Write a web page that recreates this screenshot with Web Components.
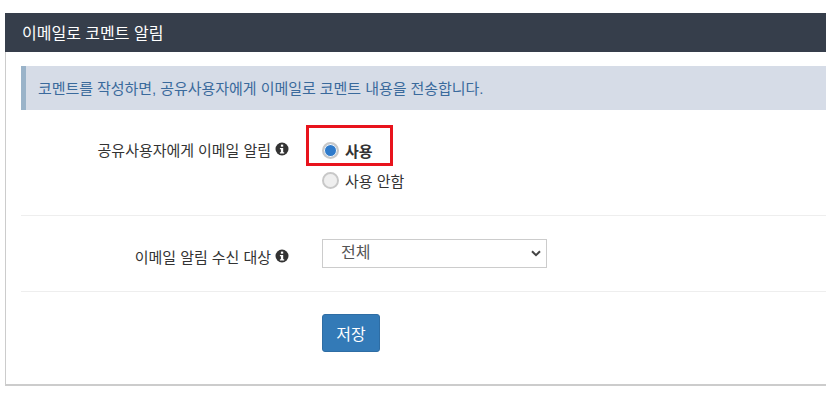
<!DOCTYPE html>
<html lang="ko">
<head>
<meta charset="utf-8">
<title>이메일로 코멘트 알림</title>
<style>
html, body { margin: 0; background: #fff; overflow: hidden; }
body { height: 412px; font-family: "Liberation Sans", "Noto Sans CJK KR", sans-serif; font-size: 15px; color: #333; }
</style>
</head>
<body>
<x-panel heading="이메일로 코멘트 알림">
    <x-callout>코멘트를 작성하면, 공유사용자에게 이메일로 코멘트 내용을 전송합니다.</x-callout>
    <x-row label="공유사용자에게 이메일 알림" pad="25px 0 20px" lift="-2px">
        <x-radio checked marked>사용</x-radio>
        <x-radio>사용 안함</x-radio>
    </x-row>
    <x-row label="이메일 알림 수신 대상" pad="23px 0 20px" lift="1px" line>
        <x-select value="전체"></x-select>
    </x-row>
    <x-row pad="22px 0 0">
        <x-button>저장</x-button>
    </x-row>
</x-panel>
<script>
"use strict"
{
    const info = `<svg width="14" height="14" viewBox="0 0 14 14" aria-hidden="true"><circle cx="7" cy="7" r="6.5" fill="#333"/><rect x="5.9" y="2.6" width="2.3" height="2.1" fill="#fff"/><path d="M4.9 6h3.3v4.2h1v1.2H4.9v-1.2h1V7.2h-1z" fill="#fff"/></svg>`;

    class Panel extends HTMLElement {
        constructor() {
            super();
            this.attachShadow({ mode: 'open' }).innerHTML = `
<style>
:host { display: block; margin: 13px 0 0 5px; box-sizing: border-box; height: 373px; border-left: 1px solid #ccc; border-bottom: 2px solid #ccc; }
header { margin-left: -1px; height: 39px; box-sizing: border-box; padding: 0 17px 1px; display: flex; align-items: center; background: #363e4b; color: #fff; font-size: 16px; }
main { padding: 14px 0 0 15px; }
</style>
<header>${this.getAttribute('heading')}</header>
<main><slot></slot></main>`;
        }
    }

    class Callout extends HTMLElement {
        constructor() {
            super();
            this.attachShadow({ mode: 'open' }).innerHTML = `
<style>
:host { display: flex; align-items: center; height: 44px; box-sizing: border-box; padding: 0 0 2px 12px; background: #d6dce7; border-left: 5px solid #9ab3c9; color: #3a6a9c; font-size: 15px; letter-spacing: -0.05px; }
</style>
<slot></slot>`;
        }
    }

    class Row extends HTMLElement {
        constructor() {
            super();
            const label = this.getAttribute('label');
            this.attachShadow({ mode: 'open' }).innerHTML = `
<style>
:host { display: grid; grid-template-columns: 268px 1fr; column-gap: 33px; }
:host([line]) { border-top: 1px solid #eee; border-bottom: 1px solid #eee; }
.label { display: flex; justify-content: flex-end; align-items: center; gap: 4px; height: 32px; transform: translateY(var(--lift, 0)); white-space: nowrap; letter-spacing: -0.04px; }
.field { display: flex; flex-direction: column; }
</style>
<div class="label">${label ? label + info : ''}</div>
<div class="field"><slot></slot></div>`;
            this.style.padding = this.getAttribute('pad');
            this.style.setProperty('--lift', this.getAttribute('lift') || '0');
        }
    }

    class Radio extends HTMLElement {
        constructor() {
            super();
            const on = this.hasAttribute('checked');
            this.attachShadow({ mode: 'open' }).innerHTML = `
<style>
:host { display: flex; align-items: center; gap: 6px; height: 30px; position: relative; white-space: nowrap; }
:host([checked]) { font-weight: bold; }
input { appearance: none; margin: 0; width: 17px; height: 17px; box-sizing: border-box; border-radius: 50%; border: 2px solid #c8c8c8; background: #efefef; background-clip: padding-box; }
input:checked { background: #2f7bcb; background-clip: padding-box; box-shadow: inset 0 0 0 1px #fff; }
.mark { display: none; position: absolute; left: -16px; top: -10px; width: 87px; height: 41px; box-sizing: border-box; border: 3px solid #e8131c; }
:host([marked]) .mark { display: block; }
</style>
<input type="radio" ${on ? 'checked' : ''}>
<slot></slot>
<span class="mark"></span>`;
        }
    }

    class Select extends HTMLElement {
        constructor() {
            super();
            this.attachShadow({ mode: 'open' }).innerHTML = `
<style>
:host { display: block; width: 225px; height: 29px; box-sizing: border-box; border: 1px solid #ccc; background: #fff; position: relative; }
span { display: block; padding-left: 18px; line-height: 26px; font-size: 16px; color: #555; }
svg { position: absolute; right: 5px; top: 10px; }
</style>
<span>${this.getAttribute('value')}</span>
<svg width="10" height="7" viewBox="0 0 10 7"><path d="M1 1.2 5 5.2 9 1.2" fill="none" stroke="#444" stroke-width="2"/></svg>`;
        }
    }

    class Button extends HTMLElement {
        constructor() {
            super();
            this.attachShadow({ mode: 'open' }).innerHTML = `
<style>
:host { display: block; width: 58px; }
button { display: block; width: 58px; height: 38px; padding: 0; background: #337ab7; border: 1px solid #2e6da4; border-radius: 3px; color: #fff; font: inherit; font-size: 16px; }
</style>
<button><slot></slot></button>`;
        }
    }

    customElements.define('x-panel', Panel);
    customElements.define('x-callout', Callout);
    customElements.define('x-row', Row);
    customElements.define('x-radio', Radio);
    customElements.define('x-select', Select);
    customElements.define('x-button', Button);
}
</script>
</body>
</html>
